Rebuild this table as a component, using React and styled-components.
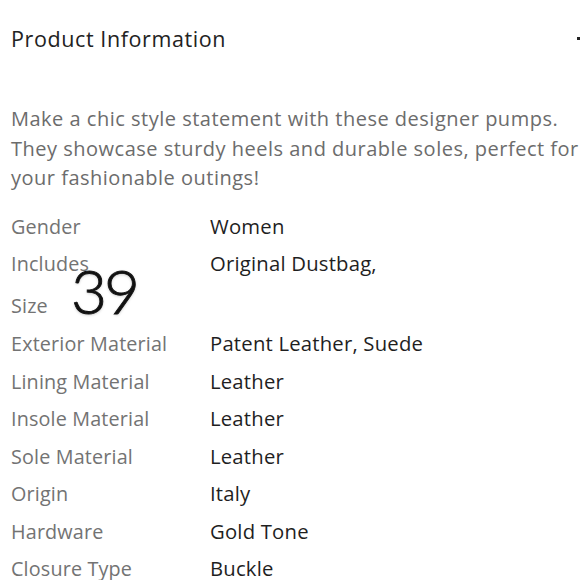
import React from "react";
import styled, { createGlobalStyle } from "styled-components";

const Global = createGlobalStyle`
  html, body { margin: 0; padding: 0; background: #fff; overflow: hidden; }
  body { font-family: "Open Sans", "Liberation Sans", sans-serif; }
`;

const Page = styled.div`
  width: 580px;
  height: 580px;
  box-sizing: border-box;
  padding: 0 0 0 11px;
  position: relative;
  overflow: hidden;
`;

const Header = styled.div`
  display: flex;
  align-items: center;
  justify-content: space-between;
  height: 77px;
`;

const Title = styled.h2`
  margin: 0;
  font-size: 21.5px;
  letter-spacing: 0.6px;
  font-weight: 400;
  color: #222;
`;

const Toggle = styled.span`
  flex: none;
  width: 14px;
  height: 3px;
  background: #222;
  margin-right: -11px;
`;

const Description = styled.p`
  margin: 27px 0 0;
  font-size: 20px;
  letter-spacing: 0.5px;
  line-height: 29.5px;
  color: #6c6c6c;
`;

const Specs = styled.div`
  margin-top: 15px;
  display: grid;
  grid-template-columns: 199px 1fr;
`;

const Label = styled.div`
  height: ${(p) => p.$h || 37.5}px;
  font-size: 19.8px;
  letter-spacing: 0.15px;
  line-height: 37.5px;
  color: #737373;
  position: relative;
`;

const Value = styled.div`
  height: ${(p) => p.$h || 37.5}px;
  font-size: 20.3px;
  letter-spacing: 0.2px;
  line-height: 37.5px;
  color: #1f1f1f;
  white-space: nowrap;
`;

const Handwritten = styled.span`
  position: absolute;
  left: 60px;
  top: -28px;
  font-family: "Lato", "DejaVu Sans", sans-serif;
  font-weight: 300;
  font-size: 62px;
  letter-spacing: -3px;
  line-height: 62px;
  color: #111;
  -webkit-text-stroke: 0.9px #111;
  text-shadow: 0 1px 3px rgba(0,0,0,0.25);
`;

const rows = [
  ["Gender", "Women"],
  ["Includes", "Original Dustbag,", 41.5],
  ["Size", "", 38.5, true],
  ["Exterior Material", "Patent Leather, Suede"],
  ["Lining Material", "Leather"],
  ["Insole Material", "Leather"],
  ["Sole Material", "Leather"],
  ["Origin", "Italy"],
  ["Hardware", "Gold Tone"],
  ["Closure Type", "Buckle"],
];

export default function App() {
  return (
    <>
      <Global />
      <Page>
        <Header>
          <Title>Product Information</Title>
          <Toggle />
        </Header>
        <Description>
          Make a chic style statement with these designer pumps. They showcase sturdy heels and durable soles, perfect for your fashionable outings!
        </Description>
        <Specs>
          {rows.map(([l, v, h, big]) => (
            <React.Fragment key={l}>
              <Label $h={h}>
                {l}
                {big && <Handwritten>39</Handwritten>}
              </Label>
              <Value $h={h}>{v}</Value>
            </React.Fragment>
          ))}
        </Specs>
      </Page>
    </>
  );
}
